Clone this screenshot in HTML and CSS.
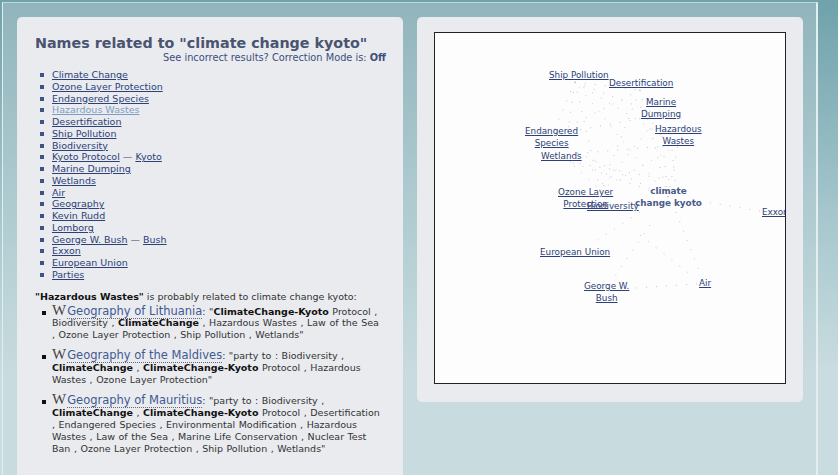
FILE: index.html
```html
<!DOCTYPE html>
<html lang="en">
<head>
<meta charset="utf-8">
<title>Names related to "climate change kyoto"</title>
<link rel="stylesheet" href="styles.css">
</head>
<body>
<div class="page">
  <main class="panel results">
    <h1>Names related to "climate change kyoto"</h1>
    <p class="mode">See incorrect results? Correction Mode is: <b>Off</b></p>
    <ul class="names">
      <li><a href="#">Climate Change</a></li>
      <li><a href="#">Ozone Layer Protection</a></li>
      <li><a href="#">Endangered Species</a></li>
      <li><a class="active" href="#">Hazardous Wastes</a></li>
      <li><a href="#">Desertification</a></li>
      <li><a href="#">Ship Pollution</a></li>
      <li><a href="#">Biodiversity</a></li>
      <li><a href="#">Kyoto Protocol</a> — <a href="#">Kyoto</a></li>
      <li><a href="#">Marine Dumping</a></li>
      <li><a href="#">Wetlands</a></li>
      <li><a href="#">Air</a></li>
      <li><a href="#">Geography</a></li>
      <li><a href="#">Kevin Rudd</a></li>
      <li><a href="#">Lomborg</a></li>
      <li><a href="#">George W. Bush</a> — <a href="#">Bush</a></li>
      <li><a href="#">Exxon</a></li>
      <li><a href="#">European Union</a></li>
      <li><a href="#">Parties</a></li>
    </ul>
    <p class="lead"><b>"Hazardous Wastes"</b> is probably related to climate change kyoto:</p>
    <ul class="sources">
      <li><span class="w">W</span><a class="wiki" href="#">Geography of Lithuania</a>: "<b>ClimateChange-Kyoto</b> Protocol , Biodiversity , <b>ClimateChange</b> , Hazardous Wastes , Law of the Sea , Ozone Layer Protection , Ship Pollution , Wetlands"</li>
      <li><span class="w">W</span><a class="wiki" href="#">Geography of the Maldives</a>: "party to : Biodiversity , <b>ClimateChange</b> , <b>ClimateChange-Kyoto</b> Protocol , Hazardous Wastes , Ozone Layer Protection"</li>
      <li><span class="w">W</span><a class="wiki" href="#">Geography of Mauritius</a>: "party to : Biodiversity , <b>ClimateChange</b> , <b>ClimateChange-Kyoto</b> Protocol , Desertification , Endangered Species , Environmental Modification , Hazardous Wastes , Law of the Sea , Marine Life Conservation , Nuclear Test Ban , Ozone Layer Protection , Ship Pollution , Wetlands"</li>
    </ul>
  </main>
  <aside class="panel graph-panel">
    <div class="graph">
      <svg class="edges" viewBox="435 33 350 350" width="350" height="350" aria-hidden="true">
        <line x1="668" y1="197" x2="575" y2="82"/>
        <line x1="668" y1="197" x2="640" y2="90"/>
        <line x1="668" y1="197" x2="660" y2="115"/>
        <line x1="668" y1="197" x2="678" y2="145"/>
        <line x1="668" y1="197" x2="552" y2="140"/>
        <line x1="668" y1="197" x2="565" y2="160"/>
        <line x1="575" y1="82" x2="640" y2="90"/>
        <line x1="575" y1="82" x2="660" y2="115"/>
        <line x1="575" y1="82" x2="678" y2="145"/>
        <line x1="575" y1="82" x2="552" y2="135"/>
        <line x1="575" y1="82" x2="565" y2="150"/>
        <line x1="575" y1="82" x2="600" y2="190"/>
        <line x1="640" y1="90" x2="552" y2="135"/>
        <line x1="640" y1="90" x2="660" y2="115"/>
        <line x1="640" y1="90" x2="600" y2="190"/>
        <line x1="660" y1="115" x2="552" y2="135"/>
        <line x1="660" y1="115" x2="600" y2="190"/>
        <line x1="678" y1="145" x2="560" y2="155"/>
        <line x1="678" y1="145" x2="600" y2="190"/>
        <line x1="552" y1="145" x2="600" y2="190"/>
        <line x1="560" y1="160" x2="670" y2="180"/>
        <line x1="672" y1="150" x2="676" y2="190"/>
        <line x1="700" y1="201" x2="760" y2="211"/>
        <line x1="676" y1="212" x2="701" y2="276"/>
        <line x1="640" y1="212" x2="590" y2="245"/>
        <line x1="650" y1="225" x2="613" y2="279"/>
        <line x1="636" y1="288" x2="697" y2="284"/>
        <line x1="640" y1="235" x2="695" y2="278"/>
      </svg>
      <a class="node ship" href="#">Ship Pollution</a>
      <a class="node desert" href="#">Desertification</a>
      <a class="node marine" href="#">Marine<br>Dumping</a>
      <a class="node hazard" href="#">Hazardous<br>Wastes</a>
      <a class="node species" href="#">Endangered<br>Species</a>
      <a class="node wet" href="#">Wetlands</a>
      <a class="node ozone" href="#">Ozone Layer<br>Protection</a>
      <a class="node bio" href="#">Biodiversity</a>
      <span class="node hub">climate<br>change kyoto</span>
      <a class="node exxon" href="#">Exxon</a>
      <a class="node eu" href="#">European Union</a>
      <a class="node bush" href="#">George W.<br>Bush</a>
      <a class="node air" href="#">Air</a>
    </div>
  </aside>
</div>
</body>
</html>
```
FILE: styles.css
```css
html, body {
  margin: 0;
  height: 475px;
  overflow: hidden;
}
body {
  background: linear-gradient(#6fa2ab 0, #a9c9cf 230px, #c9dcdf 370px);
  font-family: "DejaVu Sans", Verdana, sans-serif;
  font-size: 9.5px;
  color: #3c4a72;
}
.page {
  box-sizing: border-box;
  width: 816px;
  height: 520px;
  margin: 2px 0 0 2px;
  padding: 14px 12px 14px 14px;
  display: flex;
  align-items: flex-start;
  gap: 14px;
  border-left: 1px solid #e4eeef;
  border-right: 2px solid #e4eeef;
  border-top: 1px solid #c0d6d9;
  background: linear-gradient(#91b5bc 0, #aecbd0 200px, #c8dbde 370px);
}
.panel {
  box-sizing: border-box;
  background: #e9ebef;
  border-radius: 5px;
  width: 386px;
  flex: none;
}
.results {
  height: 500px;
  padding: 18px 17px 0 18px;
}
h1 {
  margin: 0;
  font-size: 14.3px;
  line-height: 17px;
  color: #4a5470;
}
.mode {
  margin: 0;
  text-align: right;
  font-size: 9.8px;
  line-height: 12px;
  color: #3d4e7c;
}
.names {
  list-style: none;
  margin: 5px 0 0;
  padding: 0 0 0 17px;
  line-height: 11.75px;
}
.names li {
  position: relative;
}
.names li::before {
  content: "";
  position: absolute;
  left: -12px;
  top: 4px;
  width: 4px;
  height: 4px;
  background: #3f5285;
}
a {
  color: #2c4178;
}
a.active {
  color: #7f9cc4;
}
.lead {
  margin: 10px 0 0;
  line-height: 12px;
  color: #333;
}
.lead b, .sources b {
  color: #111;
}
.sources {
  list-style: none;
  margin: 2px 0 0;
  padding: 0 2px 0 17px;
  line-height: 11.9px;
  word-spacing: 0.5px;
  color: #333;
}
.sources li {
  position: relative;
  margin-bottom: 8px;
}
.sources li::before {
  content: "";
  position: absolute;
  left: -10px;
  top: 6px;
  width: 4px;
  height: 4px;
  background: #111;
}
.w {
  font-family: "Liberation Serif", serif;
  font-size: 15px;
  color: #444;
  margin-right: 1px;
}
.wiki {
  font-size: 11.5px;
  word-spacing: 0;
  color: #3f5a92;
  text-decoration: none;
  border-bottom: 1px dotted #667;
}
.graph-panel {
  padding: 15px 17px 18px;
  height: 385px;
}
.graph {
  position: relative;
  box-sizing: border-box;
  width: 352px;
  height: 352px;
  border: 1px solid #222;
  background: #fdfdfd;
  overflow: hidden;
}
.edges {
  position: absolute;
  left: 0;
  top: 0;
}
.edges line {
  stroke: #c6c6c6;
  stroke-width: 1;
  stroke-dasharray: 1 9;
}
.node {
  position: absolute;
  margin-top: 1px;
  text-align: center;
  white-space: nowrap;
  font-size: 8.8px;
  line-height: 11.5px;
  color: #2c4178;
}
.hub { left: 200px; top: 152px; font-weight: bold; color: #4a5a8a; }
.ship { left: 114px; top: 36px; }
.desert { left: 174px; top: 44px; }
.marine { left: 206px; top: 63px; }
.hazard { left: 220px; top: 90px; }
.species { left: 90px; top: 92px; }
.wet { left: 106px; top: 117px; }
.ozone { left: 123px; top: 153px; }
.bio { left: 152px; top: 167px; }
.exxon { left: 327px; top: 173px; }
.eu { left: 105px; top: 213px; }
.bush { left: 149px; top: 247px; }
.air { left: 264px; top: 244px; }
```
